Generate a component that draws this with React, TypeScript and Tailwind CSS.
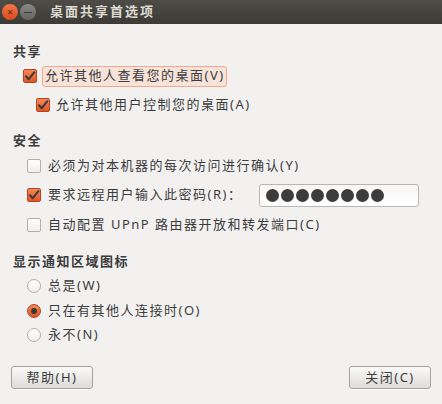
import React from "react";

const font = { fontFamily: "'Noto Sans', 'Noto Sans CJK SC', sans-serif" };

function Check({ checked }: { checked?: boolean }) {
  if (checked) {
    return (
      <span className="flex h-[14px] w-[14px] shrink-0 items-center justify-center rounded-[2px] border border-[#b5441c] bg-gradient-to-b from-[#f4895a] to-[#de5427]">
        <svg width="12" height="12" viewBox="0 0 12 12">
          <path d="M2 6.2 L4.8 9.2 L10.4 2.2" fill="none" stroke="#3d3835" strokeWidth="2" strokeLinecap="round" strokeLinejoin="round" />
        </svg>
      </span>
    );
  }
  return <span className="h-[14px] w-[14px] shrink-0 rounded-[2px] border border-[#b3afab] bg-gradient-to-b from-[#ffffff] to-[#f0efee]" />;
}

function Radio({ checked }: { checked?: boolean }) {
  if (checked) {
    return (
      <span className="flex h-[14px] w-[14px] shrink-0 items-center justify-center rounded-full border border-[#b5441c] bg-gradient-to-b from-[#f4895a] to-[#de5427]">
        <span className="h-[6px] w-[6px] rounded-full bg-[#3d3835]" />
      </span>
    );
  }
  return <span className="h-[14px] w-[14px] shrink-0 rounded-full border border-[#b3afab] bg-gradient-to-b from-[#ffffff] to-[#f0efee]" />;
}

function Button({ children }: { children: React.ReactNode }) {
  return (
    <button className="flex h-[23px] w-[82px] items-center justify-center rounded-[3px] border border-[#a7a39e] bg-gradient-to-b from-[#fafaf9] to-[#dedcd9] text-[13px] tracking-[1.5px] text-[#3c3c3c] shadow-[0_1px_0_rgba(255,255,255,0.8)]">
      {children}
    </button>
  );
}

export default function App() {
  return (
    <div style={font} className="h-[404px] w-[442px] overflow-hidden bg-[#f2f1f0] text-[13px] text-[#3c3c3c]">
      <div className="flex h-[24px] items-center bg-gradient-to-b from-[#4d4c47] to-[#3b3a36] pl-[2px]">
        <span className="flex h-[16px] w-[16px] items-center justify-center rounded-full bg-gradient-to-b from-[#f07746] to-[#d84a1b] text-[10px] leading-none text-[#5a2410]">
          ×
        </span>
        <span className="ml-[2px] flex h-[16px] w-[16px] items-center justify-center rounded-full bg-gradient-to-b from-[#8a8884] to-[#64625e]">
          <span className="h-[1px] w-[8px] bg-[#3a3936]" />
        </span>
        <span className="ml-[14px] text-[13px] font-bold tracking-[2px] text-[#dfdbd2]">桌面共享首选项</span>
      </div>

      <div className="flex flex-col px-[13px] pt-[20px] tracking-[1.5px]">
        <div className="flex h-[16px] items-center font-bold">共享</div>
        <div className="mt-[5px] flex h-[22px] items-center pl-[10px]">
          <Check checked />
          <span className="ml-[5px] flex h-[21px] items-center rounded-[3px] border border-[#f2a98a] bg-[#f8e3da] pl-[2px] pr-[1px]">
            允许其他人查看您的桌面(V)
          </span>
        </div>
        <div className="mt-[7px] flex h-[22px] items-center pl-[23px]">
          <Check checked />
          <span className="ml-[6px]">允许其他用户控制您的桌面(A)</span>
        </div>

        <div className="mt-[17px] flex h-[16px] items-center font-bold">安全</div>
        <div className="mt-[6px] flex h-[22px] items-center pl-[14px]">
          <Check />
          <span className="ml-[7px]">必须为对本机器的每次访问进行确认(Y)</span>
        </div>
        <div className="mt-[6px] flex h-[24px] items-center pl-[14px]">
          <Check checked />
          <span className="ml-[7px]">要求远程用户输入此密码(R)：</span>
          <div className="ml-auto mr-[10px] flex h-[23px] w-[160px] items-center gap-[2px] rounded-[3px] border border-[#b9b5b0] bg-gradient-to-b from-[#f7f7f7] to-[#ffffff] pl-[6px]">
            {[0, 1, 2, 3, 4, 5, 6, 7].map((i) => (
              <span key={i} className="h-[13px] w-[13px] rounded-full bg-[#3c3c3c]" />
            ))}
          </div>
        </div>
        <div className="mt-[7px] flex h-[22px] items-center pl-[14px]">
          <Check />
          <span className="ml-[7px]">自动配置 UPnP 路由器开放和转发端口(C)</span>
        </div>

        <div className="mt-[18px] flex h-[16px] items-center font-bold">显示通知区域图标</div>
        <div className="mt-[5px] flex h-[22px] items-center pl-[14px]">
          <Radio />
          <span className="ml-[7px]">总是(W)</span>
        </div>
        <div className="mt-[3px] flex h-[22px] items-center pl-[14px]">
          <Radio checked />
          <span className="ml-[7px]">只在有其他人连接时(O)</span>
        </div>
        <div className="mt-[2px] flex h-[22px] items-center pl-[14px]">
          <Radio />
          <span className="ml-[7px]">永不(N)</span>
        </div>

        <div className="mt-[20px] flex items-center justify-between pl-[-2px]">
          <div className="-ml-[2px]">
            <Button>帮助(H)</Button>
          </div>
          <div className="-mr-[2px]">
            <Button>关闭(C)</Button>
          </div>
        </div>
      </div>
    </div>
  );
}
